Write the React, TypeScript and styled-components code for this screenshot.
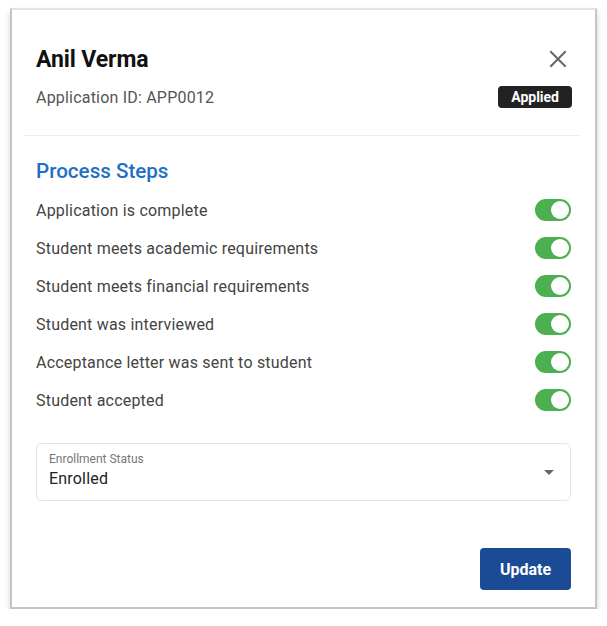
import React, { useState } from "react";
import styled, { createGlobalStyle } from "styled-components";

const GlobalStyle = createGlobalStyle`
  html, body {
    margin: 0;
    padding: 0;
    background: #ffffff;
    font-family: Roboto, "Liberation Sans", Arial, sans-serif;
  }
`;

const Page = styled.div`
  padding: 8px 10px 0 10px;
  width: 607px;
  box-sizing: border-box;
`;

const Card = styled.div`
  width: 587px;
  height: 601px;
  box-sizing: border-box;
  background: #fff;
  border: 2px solid #c4c4c4;
  border-top-color: #e2e2e2;
  box-shadow: 0 4px 6px rgba(0, 0, 0, 0.18);
  display: flex;
  flex-direction: column;
`;

const Header = styled.div`
  padding: 33px 24px 0 24px;
  display: flex;
  flex-direction: column;
`;

const TitleRow = styled.div`
  display: flex;
  align-items: center;
  justify-content: space-between;
  height: 32px;
`;

const Title = styled.h2`
  margin: 0;
  font-size: 23px;
  font-weight: 700;
  color: #111;
  letter-spacing: -0.1px;
`;

const CloseButton = styled.button`
  border: none;
  background: none;
  padding: 0;
  margin-right: 3px;
  width: 20px;
  height: 20px;
  display: flex;
  align-items: center;
  justify-content: center;
  cursor: pointer;
`;

const SubRow = styled.div`
  display: flex;
  align-items: center;
  justify-content: space-between;
  margin-top: 10px;
  height: 24px;
`;

const AppId = styled.span`
  font-size: 16px;
  color: #555;
  letter-spacing: 0.2px;
`;

const Badge = styled.span`
  background: #222;
  color: #fff;
  font-size: 14px;
  font-weight: 700;
  border-radius: 4px;
  padding: 3px 13px;
  line-height: 16px;
  margin-right: -1px;
`;

const Divider = styled.hr`
  border: none;
  border-top: 1px solid #eeeeee;
  margin: 26px 14px 0 12px;
`;

const Body = styled.div`
  padding: 21px 24px 0 24px;
  display: flex;
  flex-direction: column;
`;

const SectionTitle = styled.h3`
  margin: 0 0 6px 0;
  font-size: 20.6px;
  font-weight: 500;
  color: #1f6fc6;
  line-height: 28px;
`;

const StepRow = styled.div`
  display: flex;
  align-items: center;
  justify-content: space-between;
  height: 38px;
`;

const StepLabel = styled.span`
  font-size: 16px;
  color: #444;
  letter-spacing: 0.2px;
`;

const Track = styled.button<{ $on: boolean }>`
  width: 36px;
  height: 22px;
  border-radius: 11px;
  border: none;
  padding: 2px;
  background: ${(p) => (p.$on ? "#4caf50" : "#bdbdbd")};
  display: flex;
  justify-content: ${(p) => (p.$on ? "flex-end" : "flex-start")};
  align-items: center;
  cursor: pointer;
  box-sizing: border-box;
`;

const Knob = styled.span`
  width: 18px;
  height: 18px;
  border-radius: 50%;
  background: #fff;
  display: block;
`;

const Select = styled.div`
  margin-top: 24px;
  height: 58px;
  border: 1px solid #e3e3e3;
  border-radius: 6px;
  box-sizing: border-box;
  padding: 8px 16px 0 12px;
  display: flex;
  align-items: center;
  justify-content: space-between;
`;

const SelectText = styled.div`
  display: flex;
  flex-direction: column;
  align-self: flex-start;
`;

const SelectLabel = styled.span`
  font-size: 12px;
  color: #777;
  line-height: 14px;
`;

const SelectValue = styled.span`
  font-size: 16px;
  color: #222;
  line-height: 22px;
  margin-top: 2px;
  letter-spacing: 0.2px;
`;

const Arrow = styled.span`
  width: 0;
  height: 0;
  border-left: 5px solid transparent;
  border-right: 5px solid transparent;
  border-top: 5px solid #666;
  margin-top: -8px;
`;

const Footer = styled.div`
  display: flex;
  justify-content: flex-end;
  padding: 47px 24px 0 24px;
`;

const UpdateButton = styled.button`
  background: #1c4b95;
  color: #fff;
  border: none;
  border-radius: 4px;
  font-family: inherit;
  font-size: 16px;
  font-weight: 700;
  width: 91px;
  height: 42px;
  cursor: pointer;
`;

const steps = [
  "Application is complete",
  "Student meets academic requirements",
  "Student meets financial requirements",
  "Student was interviewed",
  "Acceptance letter was sent to student",
  "Student accepted",
];

export default function App() {
  const [checked, setChecked] = useState<boolean[]>(steps.map(() => true));

  return (
    <Page>
      <GlobalStyle />
      <Card>
        <Header>
          <TitleRow>
            <Title>Anil Verma</Title>
            <CloseButton aria-label="Close">
              <svg width="18" height="18" viewBox="0 0 18 18">
                <path d="M2 2 L16 16 M16 2 L2 16" stroke="#666" strokeWidth="2" strokeLinecap="square" />
              </svg>
            </CloseButton>
          </TitleRow>
          <SubRow>
            <AppId>Application ID: APP0012</AppId>
            <Badge>Applied</Badge>
          </SubRow>
        </Header>
        <Divider />
        <Body>
          <SectionTitle>Process Steps</SectionTitle>
          {steps.map((s, i) => (
            <StepRow key={s}>
              <StepLabel>{s}</StepLabel>
              <Track
                $on={checked[i]}
                onClick={() => setChecked((c) => c.map((v, j) => (j === i ? !v : v)))}
              >
                <Knob />
              </Track>
            </StepRow>
          ))}
          <Select>
            <SelectText>
              <SelectLabel>Enrollment Status</SelectLabel>
              <SelectValue>Enrolled</SelectValue>
            </SelectText>
            <Arrow />
          </Select>
        </Body>
        <Footer>
          <UpdateButton>Update</UpdateButton>
        </Footer>
      </Card>
    </Page>
  );
}
